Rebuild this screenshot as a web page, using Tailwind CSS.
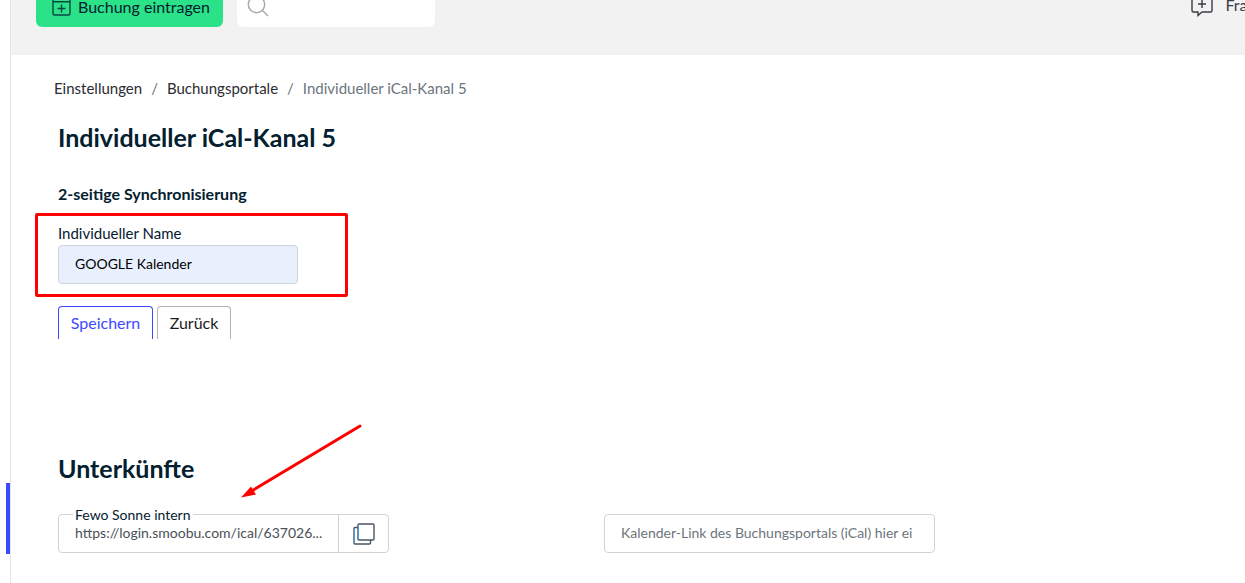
<!DOCTYPE html>
<html lang="de">
<head>
    <meta charset="UTF-8">
    <meta name="viewport" content="width=device-width, initial-scale=1.0">
    <title>Individueller iCal-Kanal 5</title>
    <script src="https://cdn.jsdelivr.net/npm/@tailwindcss/browser@4"></script>
</head>
<body class="bg-white font-['Lato',sans-serif] text-base text-[#04202f]">
    <div class="flex min-h-screen overflow-hidden">
        <aside class="w-[11px] shrink-0 border-r border-[#e6e6e6] pt-[483px]">
            <div class="ml-auto w-1 h-[71px] bg-[#3b49ff]"></div>
        </aside>
        <div class="relative flex-1 min-w-0">
            <header class="flex items-start h-[55px] bg-[#f2f2f2] pl-[25px] overflow-hidden">
                <button type="button" class="flex items-start w-[187px] h-[27px] pl-4 gap-[7px] rounded-b-md bg-[#2be288] leading-[14px] whitespace-nowrap cursor-pointer">
                    <svg class="w-[19px] h-4 shrink-0" viewBox="0 0 19 16" fill="none" stroke="#04202f" stroke-opacity=".8" stroke-width="1.4">
                        <path d="M1 0v13.500q0 1.500 1.500 1.500h14q1.500 0 1.500-1.500V0M1 1.700h17M9.500 4.500v8M5.500 8.500h8"/>
                    </svg>
                    Buchung eintragen
                </button>
                <label class="flex w-[198px] h-[27px] ml-[14px] pl-[10px] rounded-b-md bg-white">
                    <svg class="w-[22px] h-[17px] shrink-0" viewBox="0 0 22 17" fill="none" stroke="#aaa" stroke-width="1.500">
                        <circle cx="9.500" cy="4.500" r="8.200"/>
                        <path d="M15.300 10.300l5.700 5.700"/>
                    </svg>
                    <input type="search" aria-label="Suche" class="w-full min-w-0 h-4 px-2 outline-none">
                </label>
                <a href="#" class="flex items-start gap-3 ml-auto -mr-7 leading-[10px] text-[#3c3c46] whitespace-nowrap">
                    <svg class="w-[22px] h-[17px] shrink-0" viewBox="0 0 22 17" fill="none" stroke="#3c3c46" stroke-width="1.400">
                        <path d="M1 0v10.500q0 1.500 1.500 1.500h4.500v3.500l4-3.500h8.500q1.500 0 1.500-1.500V0M11 0v8M7 4h8"/>
                    </svg>
                    Fragen
                </a>
            </header>
            <main class="pl-[47px] pr-[95px] pt-[21px]">
                <nav class="-ml-1 flex gap-[9px] text-[15px] leading-6 text-[#6c757d] whitespace-nowrap">
                    <a href="#" class="text-[#2b2b33]">Einstellungen</a>
                    <span>/</span>
                    <a href="#" class="text-[#2b2b33]">Buchungsportale</a>
                    <span>/</span>
                    <span>Individueller iCal-Kanal 5</span>
                </nav>
                <h1 class="mt-[21px] text-[25px] leading-8 font-bold">Individueller iCal-Kanal 5</h1>
                <h2 class="mt-[29px] text-base leading-6 font-bold">2-seitige Synchronisierung</h2>
                <form>
                    <div class="relative mt-4">
                        <label for="name" class="block pb-px text-[15px] leading-[22px]">Individueller Name</label>
                        <input type="text" id="name" name="name" value="GOOGLE Kalender" class="block w-60 h-[39px] px-4 pb-[2px] border border-[#ced4da] rounded bg-[#e8f0fe] text-sm text-black">
                        <div class="absolute -top-[9px] -left-[23px] w-[313px] h-[84px] border-3 border-[#ff0000] rounded-xs pointer-events-none"></div>
                    </div>
                    <div class="flex gap-1 mt-[22px]">
                        <button type="submit" class="w-[95px] h-[33px] border border-b-0 border-[#3b49ff] rounded-t text-[#3b49ff] cursor-pointer">Speichern</button>
                        <button type="button" class="w-[74px] h-[33px] border border-b-0 border-[#b3b3b3] rounded-t text-[#1c1c1c] cursor-pointer">Zurück</button>
                    </div>
                </form>
                <h2 class="mt-[113px] text-[25px] leading-8 font-bold">Unterkünfte</h2>
                <div class="grid grid-cols-2 mt-[30px]">
                    <div class="relative flex w-[331px] h-[39px] border border-[#ced4da] rounded">
                        <label for="link" class="absolute -top-[9px] left-[14px] px-[2px] bg-white text-sm leading-[18px]">Fewo Sonne intern</label>
                        <input type="text" id="link" readonly value="https://login.smoobu.com/ical/637026..." class="flex-1 min-w-0 pl-4 pb-[2px] text-sm text-[#495057] outline-none">
                        <button type="button" aria-label="Link kopieren" class="flex items-center justify-center w-[50px] border-l border-[#ced4da] cursor-pointer">
                            <svg class="w-[22px] h-[22px]" viewBox="0 0 22 22" fill="none" stroke="#4a5560" stroke-width="1.400">
                                <rect x="5" y="1" width="16" height="16" rx="1"/>
                                <path d="M5 4.500H2q-1 0-1 1V20q0 1 1 1h14.500q1 0 1-1v-3"/>
                                <path d="M5.500 2v14M1.500 6v14" stroke="#4a9fd8" stroke-width="1"/>
                            </svg>
                        </button>
                    </div>
                    <input type="text" aria-label="Kalender-Link" placeholder="Kalender-Link des Buchungsportals (iCal) hier ei" class="w-[331px] h-[39px] px-4 pb-[2px] border border-[#ced4da] rounded text-sm placeholder:text-[#6c757d]">
                </div>
            </main>
            <svg class="absolute top-[423px] left-[229px] w-[124px] h-[76px] pointer-events-none" viewBox="0 0 124 76">
                <path d="M120 3L10 69" fill="none" stroke="#ff0000" stroke-width="3" stroke-linecap="round"/>
                <path d="M1 74.500L11 63.500L16 71.500Z" fill="#ff0000"/>
            </svg>
        </div>
    </div>
</body>
</html>
